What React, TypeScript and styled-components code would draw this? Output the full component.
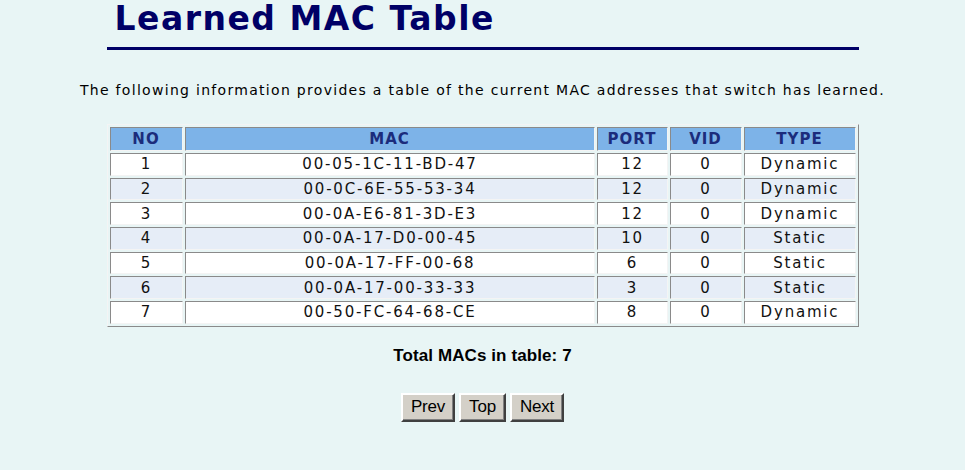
import React from "react";
import styled, { createGlobalStyle } from "styled-components";

const rows = [
  { no: 1, mac: "00-05-1C-11-BD-47", port: 12, vid: 0, type: "Dynamic" },
  { no: 2, mac: "00-0C-6E-55-53-34", port: 12, vid: 0, type: "Dynamic" },
  { no: 3, mac: "00-0A-E6-81-3D-E3", port: 12, vid: 0, type: "Dynamic" },
  { no: 4, mac: "00-0A-17-D0-00-45", port: 10, vid: 0, type: "Static" },
  { no: 5, mac: "00-0A-17-FF-00-68", port: 6, vid: 0, type: "Static" },
  { no: 6, mac: "00-0A-17-00-33-33", port: 3, vid: 0, type: "Static" },
  { no: 7, mac: "00-50-FC-64-68-CE", port: 8, vid: 0, type: "Dynamic" },
];

export default function App() {
  return (
    <>
      <GlobalStyle />
      <Page>
        <Heading>Learned MAC Table</Heading>
        <Rule />
        <Intro>
          The following information provides a table of the current MAC addresses that switch has learned.
        </Intro>
        <MacTable>
          <colgroup>
            <col style={{ width: 73 }} />
            <col style={{ width: 410 }} />
            <col style={{ width: 71 }} />
            <col style={{ width: 72 }} />
            <col style={{ width: 112 }} />
          </colgroup>
          <thead>
            <tr>
              <Th>NO</Th>
              <Th>MAC</Th>
              <Th>PORT</Th>
              <Th>VID</Th>
              <Th>TYPE</Th>
            </tr>
          </thead>
          <tbody>
            {rows.map((r, i) => (
              <tr key={r.no}>
                <Td $alt={i % 2 === 1}>{r.no}</Td>
                <Td $alt={i % 2 === 1}>{r.mac}</Td>
                <Td $alt={i % 2 === 1}>{r.port}</Td>
                <Td $alt={i % 2 === 1}>{r.vid}</Td>
                <Td $alt={i % 2 === 1}>{r.type}</Td>
              </tr>
            ))}
          </tbody>
        </MacTable>
        <Total>Total MACs in table: {rows.length}</Total>
        <Buttons>
          <NavButton>Prev</NavButton>
          <NavButton>Top</NavButton>
          <NavButton>Next</NavButton>
        </Buttons>
      </Page>
    </>
  );
}

const GlobalStyle = createGlobalStyle`
  html, body {
    margin: 0;
    padding: 0;
    background: #e8f5f5;
  }
  body {
    min-height: 470px;
  }
`;

const Page = styled.div`
  width: 752px;
  margin: 0 auto;
  display: flex;
  flex-direction: column;
  align-items: center;
`;

const Heading = styled.h1`
  align-self: stretch;
  margin: 0;
  padding: 0 0 0 8px;
  height: 40px;
  line-height: 38px;
  font-family: "DejaVu Sans", Verdana, sans-serif;
  font-size: 33px;
  font-weight: bold;
  letter-spacing: 1.5px;
  color: #000066;
`;

const Rule = styled.div`
  align-self: stretch;
  height: 3px;
  margin-top: 7px;
  background: #000066;
`;

const Intro = styled.p`
  margin: 32px -80px 0;
  white-space: nowrap;
  font-family: "DejaVu Sans", Verdana, sans-serif;
  font-size: 14px;
  letter-spacing: 1.3px;
  color: #000;
`;

const MacTable = styled.table`
  width: 752px;
  margin-top: 26px;
  border-collapse: separate;
  border-spacing: 2px;
  border: 1px solid;
  border-color: #f4f4f4 #8a8a8a #8a8a8a #f4f4f4;
  table-layout: fixed;
  font-family: "DejaVu Sans", Verdana, sans-serif;
`;

const Th = styled.th`
  height: 22px;
  padding: 0;
  background: #7db3e8;
  color: #1b2c7c;
  font-size: 15px;
  font-weight: bold;
  letter-spacing: 1px;
  border: 1px solid;
  border-color: #8a8a8a #f4f4f4 #f4f4f4 #8a8a8a;
`;

const Td = styled.td<{ $alt: boolean }>`
  height: 20.7px;
  padding: 0 0 0 1px;
  text-align: center;
  background: ${(p) => (p.$alt ? "#e6edf7" : "#ffffff")};
  color: #111;
  font-size: 15px;
  letter-spacing: 1.8px;
  border: 1px solid;
  border-color: #8a8a8a #f4f4f4 #f4f4f4 #8a8a8a;
`;

const Total = styled.div`
  margin-top: 19px;
  font-family: "Liberation Sans", Arial, sans-serif;
  font-size: 17px;
  font-weight: bold;
  letter-spacing: 0.1px;
  color: #000;
`;

const Buttons = styled.div`
  display: flex;
  gap: 4px;
  margin-top: 27px;
`;

const NavButton = styled.button`
  height: 29px;
  padding: 0 8px;
  background: #d4d0c8;
  border: 2px solid;
  border-color: #ffffff #404040 #404040 #ffffff;
  box-shadow: inset -1px -1px 0 #808080;
  font-family: "Liberation Sans", Arial, sans-serif;
  font-size: 17px;
  letter-spacing: -0.2px;
  color: #000;
`;
